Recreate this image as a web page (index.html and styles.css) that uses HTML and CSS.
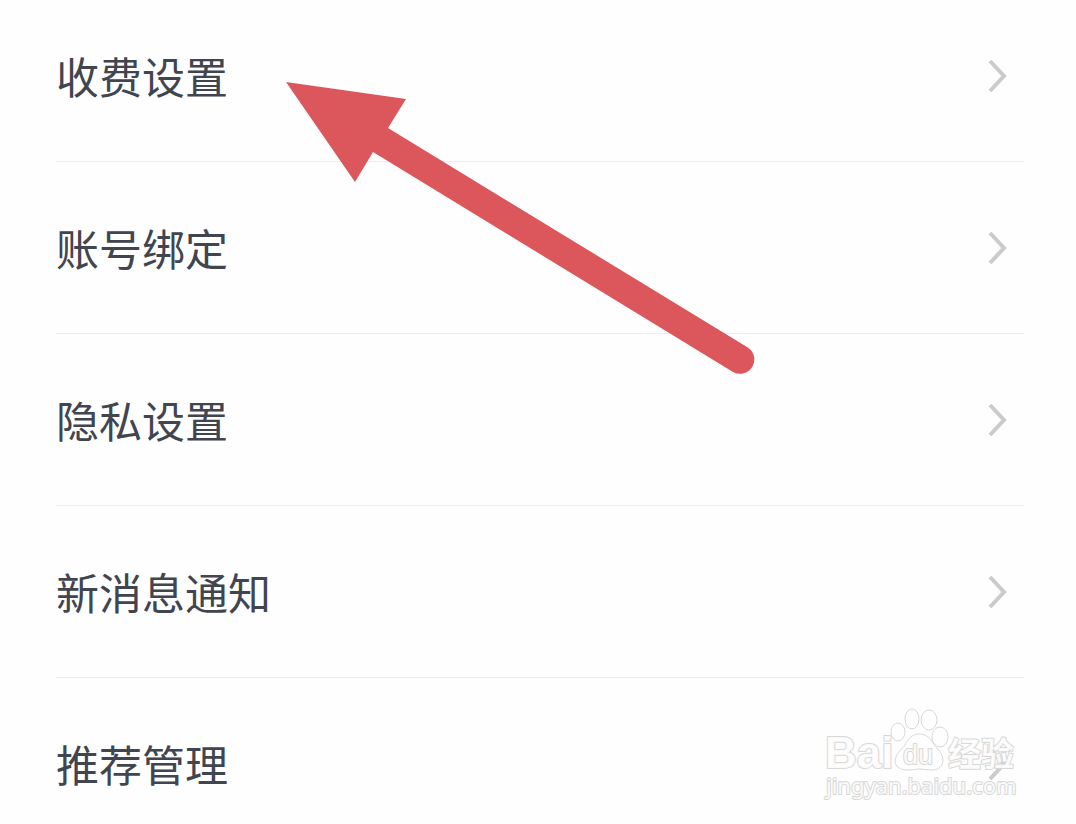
FILE: index.html
```html
<!DOCTYPE html>
<html lang="zh-CN">
<head>
<meta charset="utf-8">
<title>设置</title>
<meta name="viewport" content="width=device-width">
<link rel="stylesheet" href="styles.css">
</head>
<body>
<main class="page">
  <ul class="settings">
    <li class="item"><a class="link" href="#fees"><span class="label">收费设置</span><svg class="chevron" viewBox="0 0 20 34" aria-hidden="true"><path d="M3 2 17 17 3 32"/></svg></a></li>
    <li class="item"><a class="link" href="#account"><span class="label">账号绑定</span><svg class="chevron" viewBox="0 0 20 34" aria-hidden="true"><path d="M3 2 17 17 3 32"/></svg></a></li>
    <li class="item"><a class="link" href="#privacy"><span class="label">隐私设置</span><svg class="chevron" viewBox="0 0 20 34" aria-hidden="true"><path d="M3 2 17 17 3 32"/></svg></a></li>
    <li class="item"><a class="link" href="#notify"><span class="label">新消息通知</span><svg class="chevron" viewBox="0 0 20 34" aria-hidden="true"><path d="M3 2 17 17 3 32"/></svg></a></li>
    <li class="item"><a class="link" href="#recommend"><span class="label">推荐管理</span><svg class="chevron" viewBox="0 0 20 34" aria-hidden="true"><path d="M3 2 17 17 3 32"/></svg></a></li>
  </ul>
  <svg class="arrow" viewBox="0 0 470 293" aria-hidden="true">
    <path d="M0 0 120 17 102 46 461 265A14 14 0 0 1 447 290L87 70 69 100Z"/>
  </svg>
  <svg class="watermark" viewBox="0 0 200 100" role="img" aria-label="Baidu 经验">
    <ellipse cx="76" cy="27" rx="7" ry="9"/>
    <ellipse cx="90" cy="14" rx="7" ry="10"/>
    <ellipse cx="107" cy="15" rx="8" ry="10"/>
    <ellipse cx="118" cy="32" rx="8" ry="10"/>
    <path d="M97 29C91 29 86 33 83 40 80 44 74 48 73 56 73 62 79 65 85 65 91 65 94 64 97 64 101 64 105 65 110 65 117 65 121 61 121 55 121 48 114 43 111 38 108 32 103 29 97 29Z"/>
    <text class="brand" x="3" y="63">Bai</text>
    <text class="du" x="81" y="59">du</text>
    <text class="jing" x="126" y="61">经验</text>
    <text class="url" x="4" y="89">jingyan.baidu.com</text>
  </svg>
</main>
</body>
</html>
```

FILE: styles.css
```css
body {
  margin: 0;
  background: #fefefe;
  color: #41454f;
  font-family: "Noto Sans CJK SC", sans-serif;
}

.page {
  position: relative;
  overflow: hidden;
}

.settings {
  margin: 0;
  padding: 0 52px 0 56px;
  list-style: none;
}

.item {
  padding: 54px 0 53px;
  border-bottom: 1px solid #ededed;
}

.item:first-child {
  padding-top: 44px;
}

.item:last-child {
  padding-bottom: 28px;
  border-bottom: 0;
}

.link {
  display: flex;
  align-items: center;
  justify-content: space-between;
  padding-right: 17px;
  color: inherit;
  font-size: 43px;
  line-height: 62px;
  text-decoration: none;
}

.label {
  padding-bottom: 2px;
}

.chevron {
  width: 20px;
  height: 34px;
  fill: none;
  stroke: #cbcbcb;
  stroke-width: 4;
}

.arrow {
  position: absolute;
  top: 82px;
  left: 286px;
  width: 470px;
  height: 293px;
  fill: #db575c;
  pointer-events: none;
}

.watermark {
  position: absolute;
  right: 54px;
  bottom: 19px;
  width: 200px;
  height: 100px;
  fill: #fefefe;
  fill-opacity: 0.9;
  stroke: #d8d8d8;
  stroke-width: 1;
  pointer-events: none;
}

.watermark text {
  paint-order: stroke;
  stroke-width: 2;
  stroke-linejoin: round;
}

.brand,
.du {
  font-family: "Liberation Sans", sans-serif;
}

.brand {
  font-size: 44px;
  font-weight: 700;
}

.du {
  font-size: 27px;
}

.jing {
  font-size: 33px;
  font-weight: 700;
}

.url {
  font-family: "Noto Sans", sans-serif;
  font-size: 22px;
}
```
